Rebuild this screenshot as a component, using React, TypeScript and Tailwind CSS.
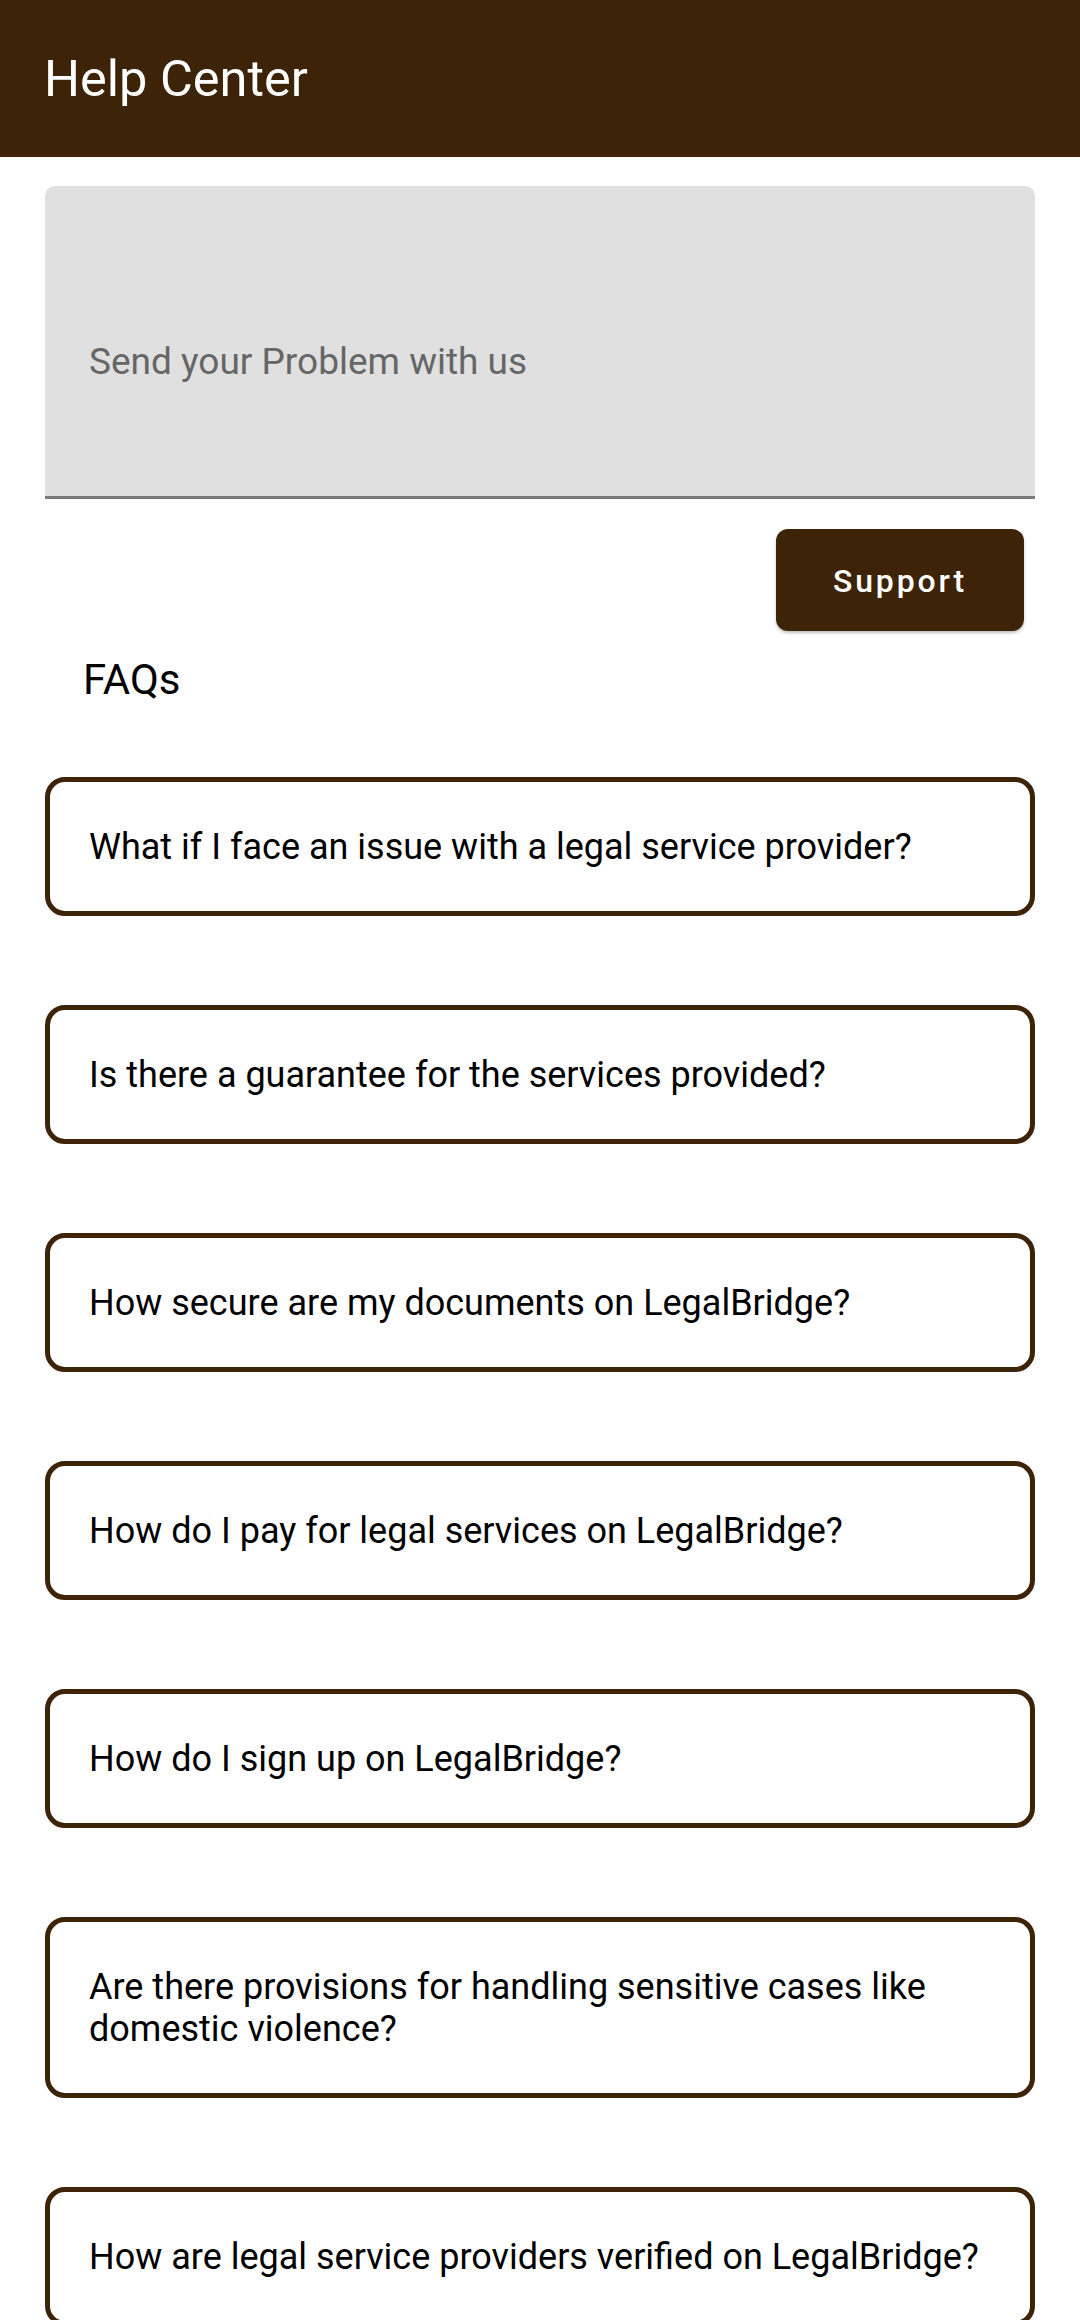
const faqs = [
  'What if I face an issue with a legal service provider?',
  'Is there a guarantee for the services provided?',
  'How secure are my documents on LegalBridge?',
  'How do I pay for legal services on LegalBridge?',
  'How do I sign up on LegalBridge?',
  'Are there provisions for handling sensitive cases like domestic violence?',
  'How are legal service providers verified on LegalBridge?',
]

export default function App() {
  return (
    <div className="min-h-[2320px] bg-white font-['Roboto',sans-serif]">
      <header className="flex h-[157px] items-center bg-[#3d2408] pl-[44px]">
        <h1 className="pt-[2px] text-[50.5px] leading-none font-normal text-white">Help Center</h1>
      </header>

      <div className="mx-[45px] mt-[29px] h-[313px] rounded-t-[10px] border-b-[3px] border-[#7a7a7a] bg-[#e0e0e0] px-[44px] pt-[154px]">
        <p className="text-[37px] leading-[1.17] text-[#666666]">Send your Problem with us</p>
      </div>

      <div className="mt-[30px] mr-[56px] flex justify-end">
        <button className="flex h-[102px] w-[248px] items-center justify-center rounded-[12px] bg-[#3d2408] pt-[2px] text-[32px] font-medium tracking-[0.09em] text-white shadow-[0_2px_3px_rgba(0,0,0,0.25)]">
          Support
        </button>
      </div>

      <h2 className="mt-[24px] pl-[83px] text-[42px] leading-[1.17] text-black">FAQs</h2>

      <div className="mt-[73px] flex flex-col gap-[89px] px-[45px]">
        {faqs.map((q) => (
          <div
            key={q}
            className="rounded-[20px] border-[5px] border-[#3d2408] bg-white px-[39px] py-[43.5px]"
          >
            <p className="text-[36px] leading-[42px] text-black">{q}</p>
          </div>
        ))}
      </div>
    </div>
  )
}
